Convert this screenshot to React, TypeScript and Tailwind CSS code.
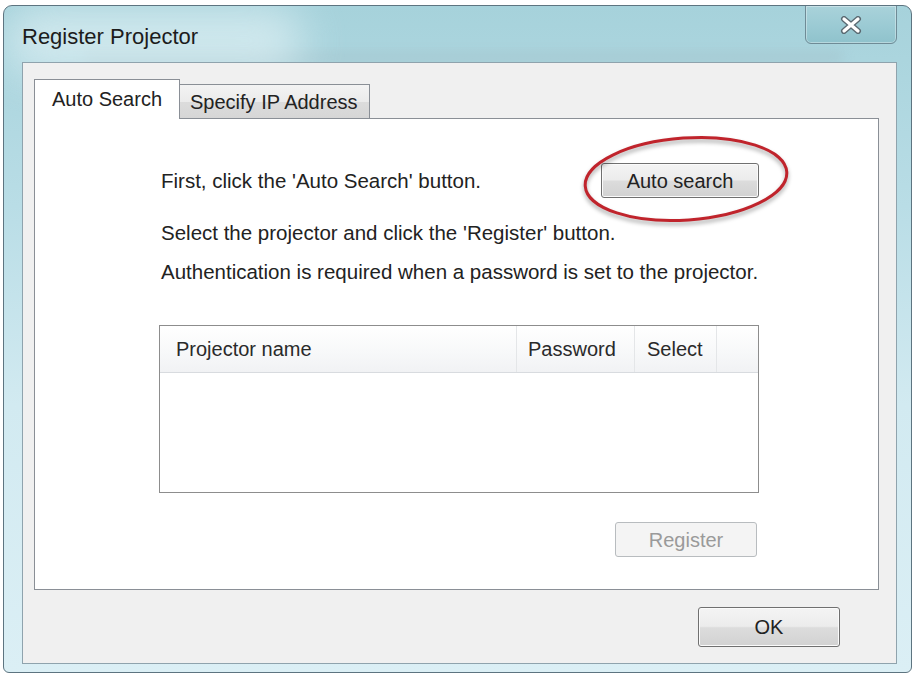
import React from "react";

const font = "font-['Liberation_Sans',Arial,sans-serif]";

function CloseGlyph() {
  return (
    <svg width="22" height="18" viewBox="0 0 22 18">
      <path d="M4 3 L18 15 M18 3 L4 15" stroke="#5b6a72" strokeWidth="6" strokeLinecap="round" />
      <path d="M4 3 L18 15 M18 3 L4 15" stroke="#ffffff" strokeWidth="3.2" strokeLinecap="round" />
    </svg>
  );
}

function Button({ label, className, disabled }: { label: string; className: string; disabled?: boolean }) {
  return (
    <div
      className={`flex items-center justify-center rounded-[3px] border text-[20px] leading-none ${
        disabled
          ? "border-[#b8bcbf] bg-[#f4f4f4] text-[#9a9a9a]"
          : "border-[#707070] bg-[linear-gradient(180deg,#f4f4f4_0%,#ececec_48%,#dcdcdc_52%,#d2d2d2_100%)] text-[#222] shadow-[inset_0_0_0_1px_#fbfbfb]"
      } ${className}`}
    >
      {label}
    </div>
  );
}

export default function App() {
  return (
    <div className={`w-[915px] h-[676px] bg-white pt-[5px] px-[3px] pb-[3px] ${font}`}>
      {/* Window frame */}
      <div className="relative flex h-full flex-col overflow-hidden rounded-t-[9px] rounded-b-[6px] border border-[#5d7480] bg-[linear-gradient(180deg,#a6d2db_0%,#b9dde6_30%,#d2eaf1_60%,#dbeff5_100%)]">
        <div className="pointer-events-none absolute left-[80px] top-[46px] h-[10px] w-[760px] rounded-full bg-[#9fb9c2] opacity-40 blur-[6px]" />
        <div className="pointer-events-none absolute left-[0px] top-[0px] h-[70px] w-[300px] rounded-full bg-[#e8f5f8] opacity-60 blur-[20px]" />

        {/* Title bar */}
        <div className="relative h-[56px] pl-[18px] pt-[18px] text-[22px] leading-[26px] text-[#1c1c1c]">
          Register Projector
        </div>

        {/* Close button */}
        <div className="absolute -top-px right-[14px] flex h-[39px] w-[92px] items-center justify-center rounded-b-[6px] border border-[#6f8b96] bg-[linear-gradient(180deg,#a9d2da_0%,#9ccbd4_50%,#8fc2cc_100%)] shadow-[inset_0_0_0_1px_rgba(255,255,255,0.35)]">
          <CloseGlyph />
        </div>

        {/* Client area */}
        <div className="relative mx-[14px] ml-[18px] mb-[8px] flex flex-1 flex-col border border-[#8fa3ad] bg-[#f0f0f0]">
          {/* Tabs */}
          <div className="ml-[11px] mt-[16px] flex items-end h-[39px] text-[20px] leading-none text-[#222]">
            <div className="relative z-10 -mb-px flex h-[40px] w-[146px] items-center justify-center border border-b-0 border-[#8a8f96] bg-white pb-[2px]">
              Auto Search
            </div>
            <div className="flex h-[34px] w-[190px] items-center border border-l-0 border-b-0 border-[#8a8f96] bg-[linear-gradient(180deg,#f3f3f3_0%,#ebebeb_50%,#dcdcdc_51%,#d6d6d6_100%)] pl-[10px]">
              Specify IP Address
            </div>
          </div>

          {/* Tab panel */}
          <div className="ml-[11px] mr-[17px] h-[472px] border border-[#8a8f96] bg-white">
            <div className="ml-[124px] w-[600px] pt-[44px] text-[20.5px] leading-[24px] text-[#222]">
              <div className="flex h-[35px] items-center justify-between">
                <span className="pl-[2px]">First, click the 'Auto Search' button.</span>
                <div className="relative">
                  <Button label="Auto search" className="h-[35px] w-[158px]" />
                  <svg
                    className="pointer-events-none absolute left-[-21px] top-[-31px] drop-shadow-[0_3px_2px_rgba(0,0,0,0.35)]"
                    width="212"
                    height="94"
                    viewBox="0 0 212 94"
                  >
                    <ellipse
                      cx="106"
                      cy="47"
                      rx="101"
                      ry="41"
                      transform="rotate(-4 106 47)"
                      fill="none"
                      stroke="#c0242c"
                      strokeWidth="3"
                    />
                  </svg>
                </div>
              </div>
              <div className="mt-[23px] pl-[2px]">Select the projector and click the 'Register' button.</div>
              <div className="mt-[15px] pl-[2px] whitespace-nowrap">
                Authentication is required when a password is set to the projector.
              </div>

              {/* Projector list */}
              <div className="mt-[41px] h-[168px] border border-[#8d8d8d] bg-white text-[20px]">
                <div className="flex h-[47px] border-b border-[#d8dbdf] bg-[linear-gradient(180deg,#ffffff_0%,#f7f8f9_60%,#f1f2f4_100%)] text-[#2a2a2a]">
                  <div className="flex w-[357px] items-center border-r border-[#e4e6e8] pl-[16px]">Projector name</div>
                  <div className="flex w-[118px] items-center border-r border-[#e4e6e8] pl-[11px]">Password</div>
                  <div className="flex w-[82px] items-center border-r border-[#e4e6e8] pl-[12px]">Select</div>
                  <div className="flex-1" />
                </div>
              </div>

              <div className="mt-[29px] flex justify-end pr-[2px]">
                <Button label="Register" className="h-[35px] w-[142px]" disabled />
              </div>
            </div>
          </div>

          {/* Dialog buttons */}
          <div className="mr-[56px] mt-[17px] flex justify-end">
            <Button label="OK" className="h-[40px] w-[142px]" />
          </div>
        </div>
      </div>
    </div>
  );
}
